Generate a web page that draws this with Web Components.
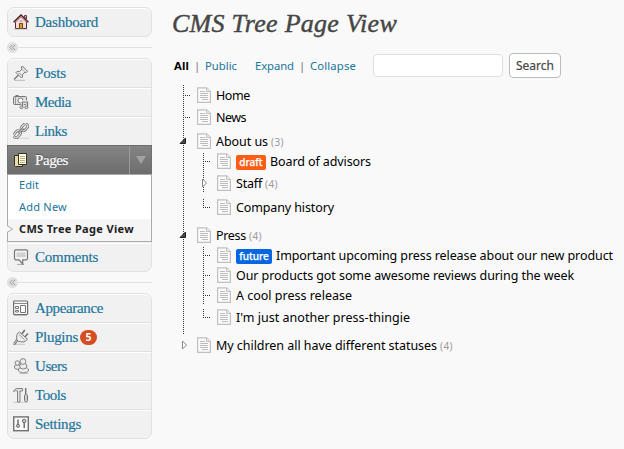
<!DOCTYPE html>
<html lang="en"><head><meta charset="utf-8"><title>CMS Tree Page View</title>
<style>
body{margin:0;background:#f9f9f9;width:624px;height:449px;overflow:hidden;font-family:"Noto Sans","Open Sans",sans-serif;color:#000}
</style></head><body>
<admin-shell>
  <admin-menu slot="menu">
    <menu-group>
      <menu-entry icon="home" w="63">Dashboard</menu-entry>
    </menu-group>
    <menu-separator></menu-separator>
    <menu-group>
      <menu-entry icon="pin" w="31">Posts</menu-entry>
      <menu-entry icon="media" w="36">Media</menu-entry>
      <menu-entry icon="link" w="32">Links</menu-entry>
      <menu-entry icon="pages" w="33" current>Pages
        <sub-entry slot="sub" w="20">Edit</sub-entry>
        <sub-entry slot="sub" w="48">Add New</sub-entry>
        <sub-entry slot="sub" w="115" active>CMS Tree Page View</sub-entry>
      </menu-entry>
      <menu-entry icon="comment" w="63">Comments</menu-entry>
    </menu-group>
    <menu-separator></menu-separator>
    <menu-group>
      <menu-entry icon="theme" w="68">Appearance</menu-entry>
      <menu-entry icon="plug" w="43" count="5">Plugins</menu-entry>
      <menu-entry icon="users" w="32">Users</menu-entry>
      <menu-entry icon="tools" w="31">Tools</menu-entry>
      <menu-entry icon="settings" w="46">Settings</menu-entry>
    </menu-group>
  </admin-menu>
  <page-title slot="main"></page-title>
  <tree-toolbar slot="main"></tree-toolbar>
  <page-tree slot="main">
    <tree-node label="Home" w="34" gap="2"></tree-node>
    <tree-node label="News" w="30" gap="4"></tree-node>
    <tree-node label="About us" w="52" count="3" state="open" gap="8">
      <tree-node label="Board of advisors" w="101" tag="draft" gap="2" first></tree-node>
      <tree-node label="Staff" w="26" count="4" state="closed" gap="4" cut></tree-node>
      <tree-node label="Company history" w="98" end></tree-node>
    </tree-node>
    <tree-node label="Press" w="30" count="4" state="open" gap="8">
      <tree-node label="Important upcoming press release about our new product" w="337" tag="future" first></tree-node>
      <tree-node label="Our products got some awesome reviews during the week" w="338"></tree-node>
      <tree-node label="A cool press release" w="116" gap="2" cut></tree-node>
      <tree-node label="I'm just another press-thingie" w="174" end></tree-node>
    </tree-node>
    <tree-node label="My children all have different statuses" w="221" count="4" state="closed" bare></tree-node>
  </page-tree>
</admin-shell>
<script>
const define=(name,render,after)=>customElements.define(name,class extends HTMLElement{
  connectedCallback(){
    if(this.shadowRoot)return;
    this.attachShadow({mode:'open'}).innerHTML=render(this);
    if(after)after(this);
  }
});

/* Text tracked so that its run fills a given width */
define('fit-text',()=>`<style>:host{display:inline-block;white-space:nowrap;flex:none}span{display:inline-block}</style><span><slot></slot></span>`,el=>{
  const s=el.shadowRoot.querySelector('span'),w=+el.getAttribute('w'),n=el.textContent.length;
  s.style.letterSpacing=((w-s.getBoundingClientRect().width)/n)+'px';
  el.style.width=w+'px';
});

const icons={
home:`<path d="M2.500 8v6.500h11V8L8 2.500z" fill="#f8d9d6" stroke="#4f2b2d"/><path d="M.6 8.300 8 1l7.400 7.300" fill="none" stroke="#4b2226" stroke-width="1.500"/><path d="M2.500 8 8 2.700 13.500 8" fill="none" stroke="#e99595" stroke-width="1"/><path d="M11.500 1.500h2V5l-2-2z" fill="#e9a19b" stroke="#4b2226" stroke-width=".8"/><path d="M6.500 9.500h3v5h-3z" fill="#dc9c25" stroke="#70451e"/><path d="M6.500 6.500h3v1h-3z" fill="#5ca6c7"/><path d="M1 15.300h14" stroke="#bbb" stroke-width=".7"/>`,
pin:`<path d="M1 15.300h11" stroke="#bbb"/><path d="M1 14.500 6 9.500" stroke="#777" stroke-width="1.300"/><path d="M9.300 1 14.500 6.300 13.300 7.500 12 7.200 9.300 9.700 9.500 12 8.500 13 3 7.500 4 6.500 6.500 6.700 9 4 8.300 2z" fill="#ececec" stroke="#777"/><path d="m9.800 4.500 2 2M6.300 8l2 2" stroke="#999"/>`,
media:`<rect x=".5" y="2.500" width="13" height="8" rx="1" fill="#ddd" stroke="#777"/><path d="M2.500 1.500h3" stroke="#777"/><circle cx="7.500" cy="6.500" r="2.500" fill="#fff" stroke="#777"/><path d="M2.500 3v7" stroke="#999"/><path d="M9.500 13.500V7.500h5v5.500" fill="none" stroke="#f1f1f1" stroke-width="2.500"/><path d="M9.500 13V8h5v5" fill="none" stroke="#777" stroke-width="1.200"/><ellipse cx="8.500" cy="13.300" rx="1.600" ry="1.300" fill="#ddd" stroke="#777"/><ellipse cx="13.300" cy="13.300" rx="1.600" ry="1.300" fill="#ddd" stroke="#777"/>`,
link:`<path d="M2 15.300h14" stroke="#c8c8c8" stroke-width=".8"/><g fill="none" stroke-linejoin="round"><g stroke="#777" stroke-width="2.700"><rect x="7.500" y="2" width="7.800" height="4.600" rx="2.300" transform="rotate(-48 11.400 4.300)"/><rect x=".2" y="8.900" width="7.800" height="4.600" rx="2.300" transform="rotate(-48 4.100 11.200)"/></g><g stroke="#ececec" stroke-width="1"><rect x="7.500" y="2" width="7.800" height="4.600" rx="2.300" transform="rotate(-48 11.400 4.300)"/><rect x=".2" y="8.900" width="7.800" height="4.600" rx="2.300" transform="rotate(-48 4.100 11.200)"/></g><path d="m5.500 10.300 4.800-5.300" stroke="#777" stroke-width="2.400"/><path d="m5.500 10.300 4.800-5.300" stroke="#e5e5e5" stroke-width=".8"/></g>`,
pages:`<path d="M1.500 3.500h8v11h-7l-1-1z" fill="#e8dfa7" stroke="#37321f"/><path d="M5.500 1.500h8v11h-8z" fill="#fffbe0" stroke="#37321f"/><path d="M7 4.500h5M7 6.500h5M7 8.500h5M7 10.500h5" stroke="#b9b083"/>`,
comment:`<path d="M4 15.400h7" stroke="#aaa"/><path d="M2.500 .800h11l1 1v8l-1 1H9.700V15L6 10.800H2.500l-1-1v-8z" fill="#f2f2f2" stroke="#777" stroke-width="1.200"/><path d="M3.500 3.500h9v4.500h-9z" fill="#d0d0d0"/>`,
theme:`<rect x=".6" y="1" width="14" height="13.500" rx="1" fill="#f8f8f8" stroke="#6f6f6f" stroke-width="1.200"/><path d="M1 3.500h13" stroke="#888"/><path d="M2.500 6.500h3v2h-3zM2.500 10.500h3v1.500h-3zM7.500 5.500h5v7h-5z" fill="#fff" stroke="#777"/><path d="M1 15.500h13" stroke="#bbb"/>`,
plug:`<path d="M2 15.300h10" stroke="#c4c4c4"/><path d="M.5 14.800c2.500 0 1.500-2.500 4-4" fill="none" stroke="#777" stroke-width="2.600"/><path d="M.5 14.800c2.500 0 1.500-2.500 4-4" fill="none" stroke="#ddd" stroke-width=".8"/><path d="m8.800 5 3-4M11.700 8l3.300-3.500" stroke="#777" stroke-width="1.800"/><path d="m6.500 3 8 7.200c-2 2.500-5 3.300-7 2.500l-2-.2-1.800-2V8.300C3.300 6.300 4.500 4 6.500 3z" fill="#ececec" stroke="#777"/><path d="m6 5.500 5.500 5" stroke="#999"/>`,
users:`<ellipse cx="11" cy="15.200" rx="5" ry=".5" fill="#bbb"/><g fill="#ececec" stroke="#858585"><ellipse cx="4.500" cy="9" rx="3.200" ry="2.300"/><circle cx="4.300" cy="5" r="2.200"/><ellipse cx="10.500" cy="12" rx="5.200" ry="2.800"/><ellipse cx="10.300" cy="8" rx="3.600" ry="3"/><circle cx="10" cy="3.500" r="2.900"/></g>`,
tools:`<path d="M0 15.300h15" stroke="#ccc"/><path d="M.5 4.500C1.500 2 3 1.500 5 1.500h4.500v2.500H7v11H4.500V4C3 3.500 2 3.500.5 4.500z" fill="#e2e2e2" stroke="#777" stroke-width=".9"/><path d="M12.700 1v6" stroke="#777" stroke-width="1.500"/><rect x="11.500" y="7.500" width="3" height="7" rx="1" fill="#ccc" stroke="#777"/>`,
settings:`<rect x=".7" y=".9" width="14.600" height="13.800" fill="#f9f9f9" stroke="#707070" stroke-width="1.400"/><path d="M5 3.500v5M11.200 6.500v5.500" stroke="#666" stroke-width="1.400"/><circle cx="5" cy="9.800" r="1.500" fill="#ccc" stroke="#666"/><circle cx="11.200" cy="5" r="1.700" fill="#ccc" stroke="#666"/>`,
page:`<path d="M.6 .800h9.200L13.400 4.400V15.300H.6z" fill="#fbfbfb" stroke="#c0c0c0" stroke-width="1.200"/><path d="M9.500 1v3.500h4" fill="#eee" stroke="#c0c0c0"/><path d="M3 4.500h5M3 6.500h8M3 8.500h8M3 10.500h8M5 12.500h6" stroke="#bcbcbc"/>`
};
define('ui-icon',el=>`<style>:host{display:block;flex:none;width:16px;height:16px}svg{display:block}</style><svg width="16" height="16" viewBox="0 0 16 16">${icons[el.getAttribute('name')]}</svg>`);

define('admin-shell',()=>`<style>
:host{display:grid;grid-template-columns:145px 1fr;column-gap:20px;padding:7px 0 0 7px;box-sizing:border-box;height:449px}
main{min-width:0}</style><nav><slot name="menu"></slot></nav><main><slot name="main"></slot></main>`);
define('admin-menu',()=>`<style>:host{display:block}</style><slot></slot>`);
define('menu-group',()=>`<style>:host{display:flex;flex-direction:column;box-sizing:border-box;border:1px solid #e1e1e1;border-radius:7px;background:#f1f1f1;box-shadow:inset 0 1px #fff}</style><slot></slot>`,el=>{
  el.lastElementChild.toggleAttribute('last',true);
});
define('menu-separator',()=>`<style>:host{display:flex;align-items:center;height:21px}
i{width:11px;height:11px;border-radius:50%;background:#e1e1e1;display:flex;align-items:center;justify-content:center}
b{flex:1;height:1px;background:#e1e1e1}svg{display:block}</style><i><svg width="7" height="7" viewBox="0 0 7 7" fill="none" stroke="#999"><path d="M3.500.800 1 3.500l2.500 2.700M6.200.800 3.700 3.500l2.500 2.700"/></svg></i><b></b>`);
define('menu-entry',el=>{const cur=el.hasAttribute('current'),c=el.getAttribute('count');
  const label=el.firstChild.textContent.trim();
  return `<style>
:host{display:block}
.row{display:flex;align-items:center;height:29px;box-sizing:border-box;padding-left:5px;border-bottom:1px solid #dfdfdf;box-shadow:inset 0 1px #fff;color:#21759b;font:15px/20px "Liberation Serif",serif;-webkit-text-stroke:.18px}
:host([last]) .row{border-bottom:0;height:28px}
:host(:first-child) .row{box-shadow:none}
:host([icon=home]) .row{height:28px}
fit-text{margin:0 0 0 6px}
.row.cur{height:29px;margin:-1px -1px 0;padding-left:6px;background:linear-gradient(#858585,#6d6d6d);color:#fff;border:0;box-shadow:inset 0 1px #6d6d6d,inset 1px 0 #707070,inset -1px 0 #707070;text-shadow:0 -1px #555}
.arrow{margin-left:auto;width:22px;height:28px;border-left:1px solid #9a9a9a;display:flex;align-items:center;justify-content:center}
.arrow:before{content:"";border:5px solid transparent;border-top:8px solid #a2a2a2;border-bottom:0}
.sub{margin:0 -1px 1px;border:1px solid #aaa;background:#fff}
.count{margin-left:2px;width:17px;height:15px;border-radius:8px;background:#d54e21;color:#fff;font:bold 10.500px/15px "Noto Sans",sans-serif;text-align:center;-webkit-text-stroke:0}
</style><div class="row ${cur?'cur':''}"><ui-icon name="${el.getAttribute('icon')}"></ui-icon><fit-text w="${el.getAttribute('w')}">${label}</fit-text>${c?`<span class="count">${c}</span>`:''}${cur?'<span class="arrow"></span>':''}</div>${cur?'<div class="sub"><slot name="sub"></slot></div>':''}`});
define('sub-entry',el=>`<style>:host{display:flex;align-items:center;position:relative;box-sizing:border-box;height:22px;padding:0 0 2px 11px;font-size:11px;line-height:16px;color:#21759b}
:host([active]){background:#f5f5f5;color:#222;font-weight:700}
svg{position:absolute;left:-2px;top:6px}</style>${el.hasAttribute('active')?'<svg width="8" height="8" viewBox="0 0 8 8"><path d="M0 0 7 4 0 8" fill="#f9f9f9"/><path d="M1 .500 6.500 4 1 7.500" fill="none" stroke="#aaa"/></svg>':''}<fit-text w="${el.getAttribute('w')}">${el.textContent}</fit-text>`);

define('page-title',()=>`<style>:host{display:block;height:46px}h1{margin:0;padding-top:1px;font:italic 26px/32px "Liberation Serif",serif;color:#464646;-webkit-text-stroke:.45px}</style><h1><fit-text w="225">CMS Tree Page View</fit-text></h1>`);
define('tree-toolbar',()=>`<style>:host{display:flex;align-items:center;height:25px;padding-left:2px;font-size:11.300px;line-height:16px;color:#21759b}
b{color:#000}i{font-style:normal;color:#777;width:16px;text-align:center}
.gap{width:18px}
input{appearance:none;box-sizing:border-box;width:130px;height:23px;margin:0 6px 0 17px;border:1px solid #dfdfdf;border-radius:4px;background:#fff;padding:0}
button{box-sizing:border-box;width:52px;height:25px;border:1px solid #bbb;border-radius:4px;background:#fff;color:#464646;font:12px/16px "Noto Sans",sans-serif;padding:0;-webkit-text-stroke:.2px}</style>
<b><fit-text w="15">All</fit-text></b><i>|</i><fit-text w="32">Public</fit-text><span class="gap"></span><fit-text w="39">Expand</fit-text><i>|</i><fit-text w="46">Collapse</fit-text><input aria-label="Search pages"><button><fit-text w="38">Search</fit-text></button>`);

define('page-tree',()=>`<style>:host{display:block;padding:7px 0 0 11px}</style><slot></slot>`);
define('tree-node',el=>{const a=k=>el.getAttribute(k),st=a('state'),gap=+a('gap')||0;
  const v='repeating-linear-gradient(#333 0 1px,transparent 1px 2px)';
  let size='100%',pos='0 0';
  if(el.hasAttribute('bare'))size='0';
  if(el.hasAttribute('end')){size='9px';pos='0 2px'}
  if(el.hasAttribute('first'))pos='0 2px';
  if(el.hasAttribute('cut'))size='19px';
  return `<style>
:host{display:block;padding-bottom:${gap}px;background:${v} ${pos}/1px ${size} no-repeat}
.row{display:flex;align-items:center;height:20px;font-size:12.500px;line-height:18px;color:#000;white-space:nowrap}
.hook{width:14px;height:16px;display:flex;align-items:center;flex:none}
.hook i{width:7px;height:1px;background:repeating-linear-gradient(90deg,#333 0 1px,transparent 1px 2px)}
.hook svg{display:block;margin-left:-4px;overflow:visible}
.hook .closed{margin-left:-3px}
.text{margin-left:3px;padding-top:1px}
small{font-size:10px;color:#999;margin-left:3px;padding-top:2px}
.tag{height:15px;margin:2px 4px 0 3px;border-radius:2px;color:#fff;font:500 10px/14px "Noto Sans",sans-serif;text-align:center;-webkit-text-stroke:.25px}
.draft{width:30px;background:#ff5d16}.future{width:36px;background:#0767e3}
.tag+.text{margin-left:0}
.kids{padding-left:20px}
</style><div class="row"><span class="hook">${st==='open'?'<svg width="8" height="8"><path d="M1 6.500 6.500 1v5.500z" fill="#444" stroke="#222"/></svg>':st==='closed'?'<svg class="closed" width="8" height="10"><path d="M2.500 1 6.500 5 2.500 9z" fill="#fff" stroke="#888"/></svg>':'<i></i>'}</span><ui-icon name="page"></ui-icon>${a('tag')?`<span class="tag ${a('tag')}">${a('tag')}</span>`:''}<fit-text class="text" w="${a('w')}">${a('label')}</fit-text>${a('count')?`<small><fit-text w="13">(${a('count')})</fit-text></small>`:''}</div><div class="kids"><slot></slot></div>`});
</script>
</body></html>
